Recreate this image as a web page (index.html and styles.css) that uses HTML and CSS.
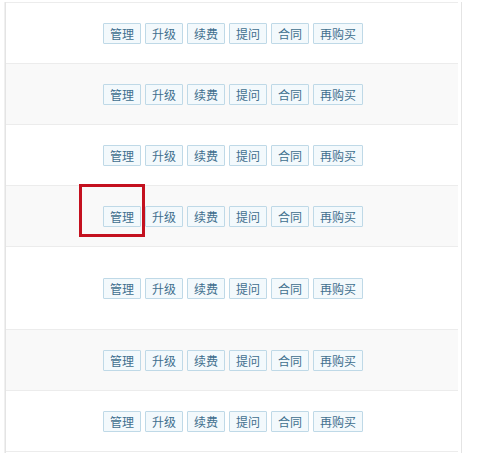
FILE: index.html
```html
<!DOCTYPE html>
<html lang="zh-CN">
<head>
<meta charset="utf-8">
<title>操作列表</title>
<link rel="stylesheet" href="styles.css">
</head>
<body>
<div class="frame">
  <div class="table">
    <div class="row">
      <div class="actions"><span class="btn">管理</span><span class="btn">升级</span><span class="btn">续费</span><span class="btn">提问</span><span class="btn">合同</span><span class="btn">再购买</span></div>
    </div>
    <div class="row">
      <div class="actions"><span class="btn">管理</span><span class="btn">升级</span><span class="btn">续费</span><span class="btn">提问</span><span class="btn">合同</span><span class="btn">再购买</span></div>
    </div>
    <div class="row">
      <div class="actions"><span class="btn">管理</span><span class="btn">升级</span><span class="btn">续费</span><span class="btn">提问</span><span class="btn">合同</span><span class="btn">再购买</span></div>
    </div>
    <div class="row has-mark">
      <div class="actions"><span class="btn">管理</span><span class="btn">升级</span><span class="btn">续费</span><span class="btn">提问</span><span class="btn">合同</span><span class="btn">再购买</span></div>
      <div class="mark"></div>
    </div>
    <div class="row tall">
      <div class="actions"><span class="btn">管理</span><span class="btn">升级</span><span class="btn">续费</span><span class="btn">提问</span><span class="btn">合同</span><span class="btn">再购买</span></div>
    </div>
    <div class="row">
      <div class="actions"><span class="btn">管理</span><span class="btn">升级</span><span class="btn">续费</span><span class="btn">提问</span><span class="btn">合同</span><span class="btn">再购买</span></div>
    </div>
    <div class="row">
      <div class="actions"><span class="btn">管理</span><span class="btn">升级</span><span class="btn">续费</span><span class="btn">提问</span><span class="btn">合同</span><span class="btn">再购买</span></div>
    </div>
  </div>
</div>
</body>
</html>
```

FILE: styles.css
```css
html, body {
  margin: 0;
  padding: 0;
  background: #ffffff;
}

body {
  width: 478px;
  height: 453px;
  overflow: hidden;
  font-family: "Noto Sans CJK SC", "Noto Sans", sans-serif;
  border-top: 2px solid transparent;
  box-sizing: border-box;
}

.frame {
  margin-left: 5px;
  width: 455px;
  height: 460px;
  border-left: 1px solid #e4e4e4;
  border-right: 1px solid #e4e4e4;
  box-shadow: -1px 0 0 #f0f0f0;
}

.table {
  width: 452px;
  border-top: 1px solid #ececec;
}

.row {
  height: 60px;
  border-bottom: 1px solid #ececec;
  display: flex;
  align-items: center;
  justify-content: center;
  padding-left: 2px;
  background: #ffffff;
}

.row:nth-child(even) {
  background: #f9f9f9;
}

.row.tall {
  height: 82px;
}

.has-mark {
  position: relative;
}

.actions {
  display: flex;
  gap: 4px;
  margin-top: 1px;
}

.btn {
  display: block;
  height: 19px;
  line-height: 19px;
  padding: 0 6px;
  font-size: 12px;
  color: #3f6f8e;
  background: #f3f9fc;
  border: 1px solid #bfd9e7;
  border-radius: 1px;
  white-space: nowrap;
}

.mark {
  position: absolute;
  left: 73px;
  top: -2px;
  width: 60px;
  height: 47px;
  border: 3px solid #c4111f;
}
```
